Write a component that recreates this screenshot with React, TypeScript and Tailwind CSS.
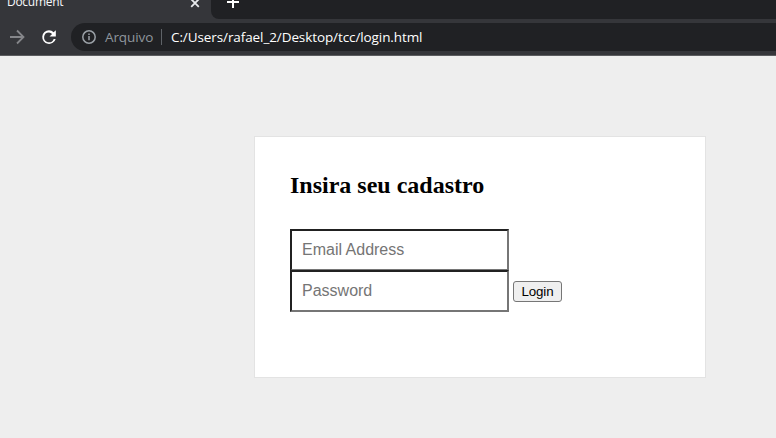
import React from "react";

function Tabs() {
  return (
    <div className="flex h-[23px] items-start bg-[#35363a]">
      <div className="flex h-[19px] w-[211px] shrink-0 items-start">
        <span className="-mt-[7px] ml-[7px] w-[182px] text-[12px] leading-[18px] tracking-[-0.280px] text-[#f8f9fa]">Document</span>
        <svg className="mt-[-2px] ml-[1px] shrink-0" width="10" height="10" viewBox="0 0 10 10" stroke="#e8eaed" strokeWidth="1.8">
          <path d="M1.2 1.2 8.8 8.8M8.8 1.2 1.2 8.8" />
        </svg>
      </div>
      <div className="h-[19px] flex-1 rounded-bl-[8px] bg-[#202124]">
        <svg className="ml-4 -mt-1" width="12" height="12" viewBox="0 0 12 12" stroke="#ffffff" strokeWidth="2">
          <path d="M0 6h12M6 0v12" />
        </svg>
      </div>
    </div>
  );
}

function AddressBar() {
  return (
    <div className="flex h-[33px] items-start border-b border-[#5b5c5f] bg-[#35363a]">
      <svg className="mt-[6px] ml-[9px] shrink-0" width="16" height="16" viewBox="0 0 16 16" fill="none" stroke="#85868a" strokeWidth="1.8">
        <path d="M1 8h13M8 1.5 14.5 8 8 14.5" />
      </svg>
      <svg className="mt-[4px] ml-[14px] shrink-0" width="20" height="20" viewBox="0 0 24 24" fill="#ffffff">
        <path d="M20.2 3.8v7.6h-7.6l3.1-3.1A5.7 5.7 0 0 0 12 6.500a5.900 5.900 0 1 0 5.600 7.800h2.400A8.200 8.200 0 1 1 12 3.900c2.200 0 4.100.9 5.500 2.400z" />
      </svg>
      <div className="ml-[12px] flex h-[28px] flex-1 items-center rounded-l-full bg-[#202124] pl-[11px] whitespace-nowrap">
        <svg className="shrink-0" width="14" height="14" viewBox="0 0 14 14" fill="none" stroke="#9aa0a6" strokeWidth="1.5">
          <circle cx="7" cy="7" r="6.200" />
          <path d="M7 6v4.300M7 3.500v1.500" />
        </svg>
        <span className="ml-[9px] w-[49px] text-[13.500px] tracking-[-0.100px] text-[#8f969d]">Arquivo</span>
        <span className="ml-[7px] h-4 w-px bg-[#5f6368]" />
        <span className="ml-[9px] text-[13.500px] tracking-[-0.095px] text-white">C:/Users/rafael_2/Desktop/tcc/login.html</span>
      </div>
    </div>
  );
}

const field =
  "block h-[42px] w-[219px] rounded-none border-2 border-t-[#212121] border-r-[#767676] border-b-[#767676] border-l-[#212121] bg-white px-[10px] font-['Liberation_Sans',Arial,sans-serif] text-[16px] text-black outline-none placeholder:text-[#757575]";

export default function App() {
  return (
    <div className="h-[438px] w-[776px] overflow-hidden bg-[#eeeeee] font-['Open_Sans','Noto_Sans',sans-serif]">
      <Tabs />
      <AddressBar />
      <main className="pt-[80px] pl-[254px]">
        <form className="h-[242px] w-[452px] border border-[#e3e3e3] bg-white px-[35px] pt-[34px]" onSubmit={(e) => e.preventDefault()}>
          <h2 className="font-['Liberation_Serif','Times_New_Roman',serif] text-[24px] leading-[28px] font-bold whitespace-nowrap text-black">Insira seu cadastro</h2>
          <input className={`${field} mt-[30px]`} type="text" placeholder="Email Address" />
          <div className="-mt-px flex items-center">
            <input className={field} type="password" placeholder="Password" />
            <button className="ml-1 h-[21px] w-[49px] rounded-[3px] border border-[#767676] bg-[#efefef] font-['Liberation_Sans',Arial,sans-serif] text-[13.333px] leading-[15px] tracking-[-0.100px] text-black">Login</button>
          </div>
        </form>
      </main>
    </div>
  );
}
